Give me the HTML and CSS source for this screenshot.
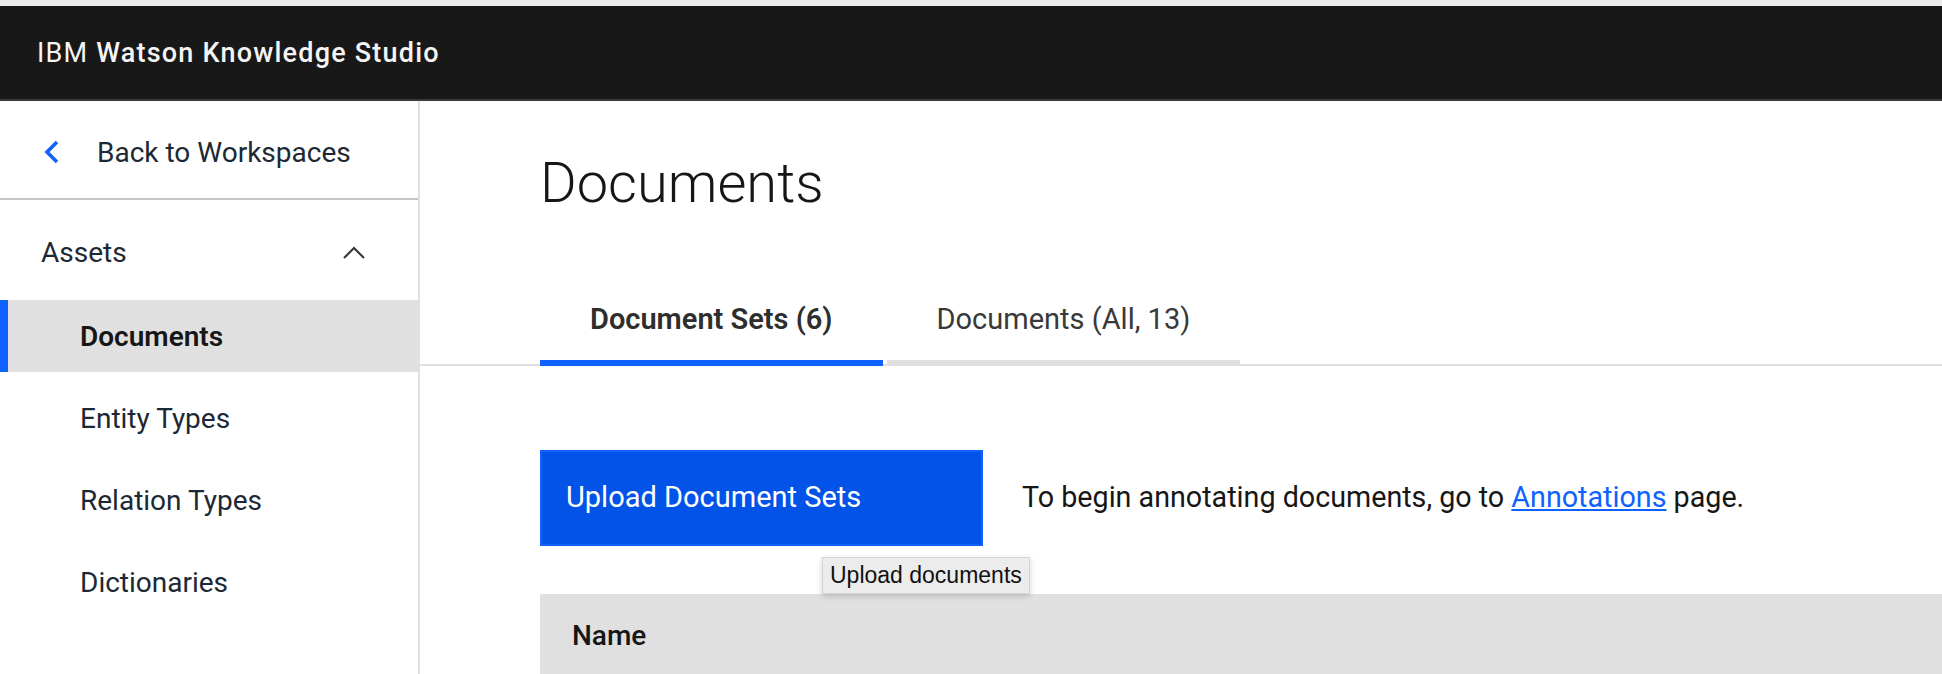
FILE: index.html
```html
<!DOCTYPE html>
<html lang="en">
<head>
    <meta charset="UTF-8">
    <meta name="viewport" content="width=device-width, initial-scale=1.0">
    <title>Documents - IBM Watson Knowledge Studio</title>
    <link rel="stylesheet" href="styles.css">
</head>
<body>
    <div class="chrome-strip"></div>
    <header class="topbar">
        <span class="brand">IBM <strong>Watson Knowledge Studio</strong></span>
    </header>

    <div class="layout">
        <nav class="sidenav">
            <a class="back-link" href="#">
                <svg class="chevron-left" width="16" height="24" viewBox="0 0 16 24">
                    <path d="M13 2 L3 12 L13 22" fill="none" stroke="#0f62fe" stroke-width="3.6"/>
                </svg>
                <span>Back to Workspaces</span>
            </a>
            <div class="nav-group">
                <div class="nav-group-title">
                    <span>Assets</span>
                    <svg class="chevron-up" width="22" height="13" viewBox="0 0 22 13">
                        <path d="M1 12 L11 2 L21 12" fill="none" stroke="#393939" stroke-width="2.2"/>
                    </svg>
                </div>
                <ul class="nav-items">
                    <li class="active">Documents</li>
                    <li>Entity Types</li>
                    <li>Relation Types</li>
                    <li>Dictionaries</li>
                </ul>
            </div>
        </nav>

        <main class="content">
            <h1 class="page-title">Documents</h1>

            <div class="tabs">
                <div class="tab selected">Document Sets (6)</div>
                <div class="tab">Documents (All, 13)</div>
            </div>

            <div class="toolbar">
                <button class="btn-primary">Upload Document Sets</button>
                <p class="hint">To begin annotating documents, go to <a href="#">Annotations</a> page.</p>
                <div class="tooltip">Upload documents</div>
            </div>

            <div class="table-head">
                <span>Name</span>
            </div>
        </main>
    </div>
</body>
</html>
```

FILE: styles.css
```css
body {
    margin: 0;
    padding: 0;
    background-color: #fff;
    font-family: Roboto, "Noto Sans", Arial, sans-serif;
    color: #161616;
    overflow: hidden;
}

.chrome-strip {
    height: 6px;
    background-color: #ececec;
}

/* Top header */
.topbar {
    height: 93px;
    background-color: #181818;
    border-bottom: 2px solid #3a3a3a;
    display: flex;
    align-items: center;
    padding-left: 37px;
}

.brand {
    color: #f4f4f4;
    font-size: 27px;
    font-weight: 400;
    letter-spacing: 1.2px;
}

.brand strong {
    font-weight: 500;
}

.layout {
    display: flex;
    height: 573px;
}

/* Side navigation */
.sidenav {
    width: 418px;
    flex-shrink: 0;
    border-right: 2px solid #dde1e6;
    color: #1c2833;
    font-size: 28px;
}

.back-link {
    display: flex;
    align-items: center;
    height: 99px;
    padding-top: 5px;
    box-sizing: border-box;
    border-bottom: 2px solid #c6c6c6;
    color: #1c2833;
    text-decoration: none;
}

.chevron-left {
    margin-left: 44px;
    margin-right: 37px;
}

.nav-group-title {
    display: flex;
    align-items: center;
    justify-content: space-between;
    height: 100px;
    padding: 4px 53px 0 41px;
    box-sizing: border-box;
}

.nav-items {
    list-style: none;
    margin: 0;
    padding: 0;
}

.nav-items li {
    height: 72px;
    display: flex;
    align-items: center;
    padding-left: 80px;
    margin-bottom: 10px;
}

.nav-items li.active {
    background-color: #e0e0e0;
    box-shadow: inset 8px 0 0 #0f62fe;
    font-weight: 600;
    color: #161616;
}

/* Main content */
.content {
    flex: 1;
}

.page-title {
    margin: 54px 0 0 0;
    padding-left: 120px;
    font-size: 56px;
    line-height: 56px;
    font-weight: 300;
    color: #161616;
}

.tabs {
    display: flex;
    gap: 4px;
    margin-top: 69px;
    padding-left: 120px;
    box-shadow: inset 0 -2px 0 #e0e0e0;
}

.tab {
    height: 80px;
    line-height: 78px;
    padding: 0 50px;
    border-bottom: 6px solid #e0e0e0;
    font-size: 29px;
    color: #393939;
}

.tab.selected {
    border-bottom-color: #0f62fe;
    font-weight: 600;
    color: #2e2e2e;
}

.toolbar {
    position: relative;
    display: flex;
    align-items: center;
    margin: 84px 0 0 120px;
}

.btn-primary {
    width: 443px;
    height: 96px;
    background-color: #0353e9;
    border: 2px solid #0f62fe;
    color: #fff;
    font-family: inherit;
    font-size: 29px;
    text-align: left;
    padding: 0 0 2px 24px;
    cursor: pointer;
}

.hint {
    margin: 0 0 2px 39px;
    font-size: 28.7px;
    color: #161616;
}

.hint a {
    color: #0f62fe;
}

.tooltip {
    position: absolute;
    left: 282px;
    top: 107px;
    padding: 0 7px;
    height: 35px;
    line-height: 35px;
    background-color: #ececec;
    border: 1px solid #d4d4d4;
    box-shadow: 0 2px 6px rgba(0, 0, 0, 0.18);
    font-family: "Liberation Sans", Arial, sans-serif;
    font-size: 23px;
    color: #111;
    z-index: 2;
}

.table-head {
    margin: 48px 0 0 120px;
    height: 82px;
    background-color: #e0e0e0;
    display: flex;
    align-items: center;
    padding-left: 32px;
    font-size: 28px;
    font-weight: 500;
    color: #161616;
}
```
